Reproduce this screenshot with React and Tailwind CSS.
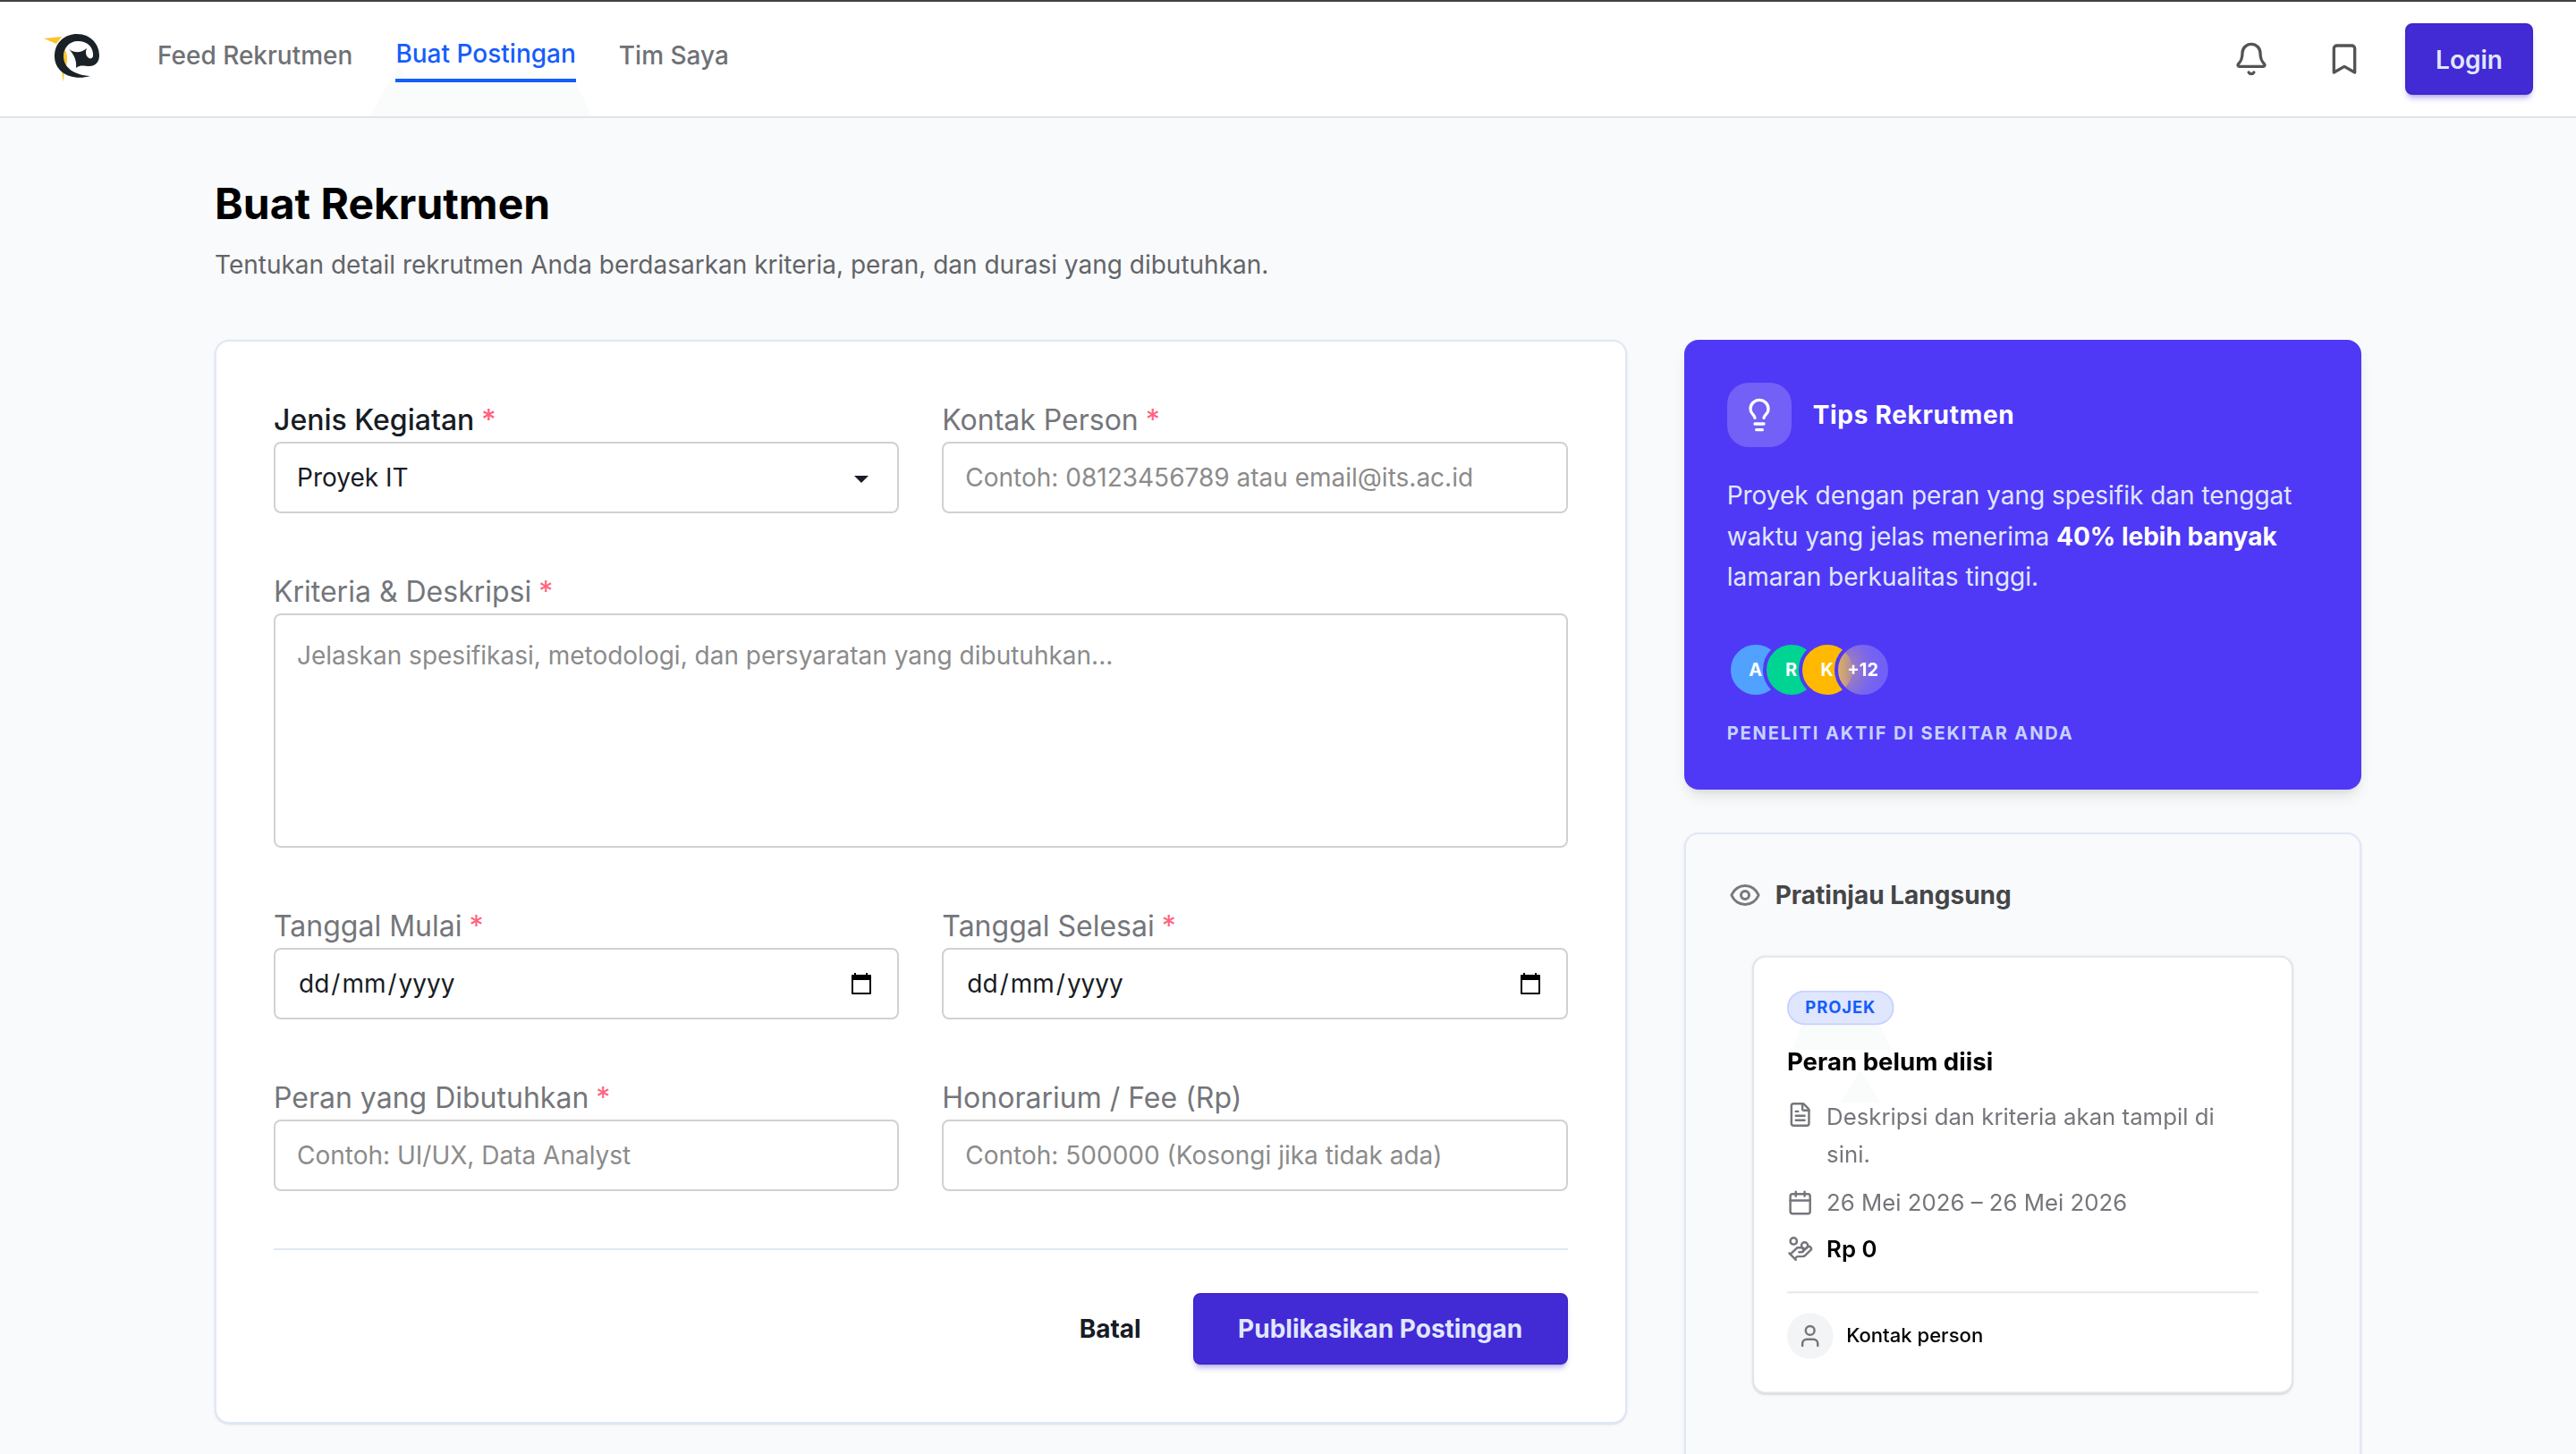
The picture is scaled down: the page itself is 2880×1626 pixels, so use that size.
import { Bell, Bookmark, Calendar, Eye, FileText, HandCoins, Lightbulb, User } from 'lucide-react';

const fieldClass =
  'flex h-20 w-full items-center rounded-lg border-2 border-[#d1d1d1] bg-white px-6 text-[28px] leading-[42px]';

function Logo() {
  return (
    <svg className="h-16 w-16" viewBox="0 0 64 64">
      <path d="M1 5 21 3 15 11Z" fill="#fcc42c" />
      <path d="M24 17C28 22 28 32 24 42L22.5 54 21 40Z" fill="#fcc42c" />
      <path
        d="M53 47C32 53 13 43 13 25C13 9 25 0 38 0C54 0 63 12 63 24C63 32 58 36 52 36C46 36 42 34 37 38C38 30 35 23 29 17C36 22 43 21 49 16C45 25 54 31 56 25C57 15 50 8 39 8C29 8 23 16 23 25C23 37 34 46 53 47Z"
        fill="#1b2227"
      />
    </svg>
  );
}

function Field({ label, required, active, children }) {
  return (
    <div className="min-w-0">
      <div
        className={
          active
            ? 'h-12 text-[32px] font-medium leading-[48px] text-[#181c24]'
            : 'h-12 text-[32px] leading-[48px] text-[#74767b]'
        }
      >
        {label} {required && <span className="-ml-px text-[#ff637e]">*</span>}
      </div>
      {children}
    </div>
  );
}

function TextField({ placeholder }) {
  return (
    <input
      type="text"
      placeholder={placeholder}
      className={`${fieldClass} placeholder:text-[#8b8b8b]`}
    />
  );
}

function DateField() {
  return (
    <div className={`${fieldClass} justify-between text-[#181c24]`}>
      <span className="flex pl-0.5">
        <span>dd</span>
        <span className="px-0.5">/</span>
        <span>mm</span>
        <span className="px-0.5">/</span>
        <span>yyyy</span>
      </span>
      <svg className="mr-1 h-6 w-6" viewBox="0 0 24 24" fill="none">
        <path d="M2 3h20v20H2z" stroke="#000" strokeWidth="2" strokeLinejoin="round" />
        <path d="M2 3h20v5H2zM4 0h2v3H4zM17 0h2v3h-2z" fill="#000" />
      </svg>
    </div>
  );
}

const avatars = [
  { text: 'A', className: 'bg-[#51a2ff]' },
  { text: 'R', className: 'bg-[#00d492]' },
  { text: 'K', className: 'bg-[#ffb900]' },
  { text: '+12', className: 'bg-white/20 backdrop-blur-lg' },
];

export default function App() {
  return (
    <div className="h-screen overflow-hidden bg-[#f9fafc] font-[Inter,sans-serif] text-black">
      <header className="flex h-[132px] items-start justify-between border-t-2 border-b-2 border-t-[#444142] border-b-[#e3e4e5] bg-white pl-12 pr-12">
        <div className="flex items-start">
          <div className="pt-9">
            <Logo />
          </div>
          <nav className="ml-16 flex gap-12 pt-9 text-[28px] font-medium leading-10 text-[#6f7175]">
            <span className="pt-1">Feed Rekrutmen</span>
            <span className="relative pt-0.5">
              <svg className="absolute -left-7 top-8 h-[60px] w-[248px]" viewBox="0 0 248 60">
                <path d="M0 60 31 2 42 20H229L248 60Z" fill="#fafcfb" />
              </svg>
              <span className="relative flex h-[52px] border-b-4 border-[#155dfc] text-[#155dfc]">
                Buat Postingan
              </span>
            </span>
            <span className="pt-1">Tim Saya</span>
          </nav>
        </div>
        <div className="flex items-center pt-6">
          <Bell className="mr-16 size-10 text-[#535456]" strokeWidth={2} />
          <Bookmark className="mr-12 size-10 text-[#535456]" strokeWidth={2} />
          <button className="h-20 w-[143px] rounded-lg border-2 border-[#3f27cb] bg-[#422ad5] pt-0.5 text-[28px] font-semibold text-[#e0e7ff] shadow-[0_6px_6px_-2px_#422ad54d,0_4px_4px_-4px_#422ad54d]">
            Login
          </button>
        </div>
      </header>

      <main className="mx-auto w-[2400px]">
        <h1 className="pt-16 text-[48px] font-bold leading-[64px]">Buat Rekrutmen</h1>
        <p className="mt-4 text-[28px] leading-10 text-[#636467]">
          Tentukan detail rekrutmen Anda berdasarkan kriteria, peran, dan durasi yang dibutuhkan.
        </p>

        <div className="mt-16 grid grid-cols-12 items-start gap-16">
          {/* Form */}
          <section className="col-span-8 h-[1212px] rounded-2xl border-2 border-[#e0e7f7] bg-white p-16 shadow-sm">
            <div className="grid grid-cols-2 gap-x-12 gap-y-16">
              <Field label="Jenis Kegiatan" required active>
                <div className={`${fieldClass} justify-between text-[#181c24]`}>
                  <span>Proyek IT</span>
                  <svg className="mr-2 mt-1 h-2 w-4" viewBox="0 0 16 8">
                    <path d="M0 0h16L8 8z" fill="#181c24" />
                  </svg>
                </div>
              </Field>
              <Field label="Kontak Person" required>
                <TextField placeholder="Contoh: 08123456789 atau email@its.ac.id" />
              </Field>
              <div className="col-span-2">
                <Field label="Kriteria & Deskripsi" required>
                  <textarea
                    placeholder="Jelaskan spesifikasi, metodologi, dan persyaratan yang dibutuhkan..."
                    className="block h-[262px] w-full resize-none rounded-lg border-2 border-[#d1d1d1] px-6 py-6 text-[28px] leading-[42px] placeholder:text-[#8b8b8b]"
                  />
                </Field>
              </div>
              <Field label="Tanggal Mulai" required>
                <DateField />
              </Field>
              <Field label="Tanggal Selesai" required>
                <DateField />
              </Field>
              <Field label="Peran yang Dibutuhkan" required>
                <TextField placeholder="Contoh: UI/UX, Data Analyst" />
              </Field>
              <Field label="Honorarium / Fee (Rp)">
                <TextField placeholder="Contoh: 500000 (Kosongi jika tidak ada)" />
              </Field>
            </div>

            <div className="mt-16 flex items-center justify-end border-t-2 border-[#e0e7f7] pt-12 text-[28px] font-bold">
              <button className="mr-[58px] text-[#181c24]">Batal</button>
              <button className="h-20 w-[419px] rounded-lg border-2 border-[#3f27cb] bg-[#422ad5] text-[#e0e7ff] shadow-[0_6px_6px_-2px_#422ad54d,0_4px_4px_-4px_#422ad54d]">
                Publikasikan Postingan
              </button>
            </div>
          </section>

          <aside className="col-span-4 flex flex-col gap-12">
            {/* Tips */}
            <section className="h-[503px] rounded-2xl bg-[#4f39f6] p-12 text-white shadow-lg">
              <div className="flex items-center gap-6">
                <div className="flex size-[72px] items-center justify-center rounded-3xl bg-white/20">
                  <Lightbulb className="size-10" />
                </div>
                <h2 className="text-[28px] font-bold tracking-wide">Tips Rekrutmen</h2>
              </div>
              <p className="mt-8 text-[28px] leading-[45.5px] text-[#e0e7ff]">
                Proyek dengan peran yang spesifik dan tenggat waktu yang jelas menerima{' '}
                <strong className="font-bold text-white">40% lebih banyak</strong> lamaran berkualitas
                tinggi.
              </p>
              <div className="mt-12 flex -space-x-6">
                {avatars.map((avatar) => (
                  <div
                    key={avatar.text}
                    className={`flex size-16 items-center justify-center rounded-full border-4 border-[#4f39f6] text-[20px] font-bold ${avatar.className}`}
                  >
                    {avatar.text}
                  </div>
                ))}
              </div>
              <p className="mt-6 text-[20px] font-bold leading-[30px] tracking-[1.9px] text-[#c6d2ff]">
                PENELITI AKTIF DI SEKITAR ANDA
              </p>
            </section>

            {/* Live preview */}
            <section className="h-[800px] rounded-2xl border-2 border-[#e0e7f7] bg-[#f9fafc] p-12 shadow-sm">
              <div className="flex items-center gap-4 text-[28px] font-bold leading-10 text-[#454648]">
                <Eye className="size-9 text-[#77797d]" />
                Pratinjau Langsung
              </div>

              <div className="mt-12 origin-top scale-[0.92] rounded-2xl border-2 border-[#e5e5e7] bg-white p-10 text-[28px] leading-10 text-[#74767b] shadow-sm">
                <div className="relative">
                  <svg className="absolute left-0 top-[42px] h-24 w-32" viewBox="0 0 128 96">
                    <path d="M17 0h96l14 30H7zM89 54l25 41H65z" fill="#fafcfb" />
                  </svg>
                  <span className="relative flex h-[42px] w-[130px] items-center justify-center rounded-full border-2 border-[#c6d2ff] bg-[#dfe6fd] text-[20px] font-bold tracking-wider text-[#155dfc]">
                    PROJEK
                  </span>
                  <h3 className="relative mt-6 text-[30px] font-bold text-black">Peran belum diisi</h3>
                </div>
                <div className="relative mt-[25px] flex flex-col gap-4">
                  <div className="flex gap-4">
                    <FileText className="mt-1 size-8 shrink-0" />
                    <p className="leading-[45.5px]">Deskripsi dan kriteria akan tampil di sini.</p>
                  </div>
                  <div className="flex items-center gap-4">
                    <Calendar className="size-8" />
                    26 Mei 2026 – 26 Mei 2026
                  </div>
                  <div className="flex items-center gap-4">
                    <HandCoins className="size-8" />
                    <span className="font-semibold text-black">Rp 0</span>
                  </div>
                </div>
                <div className="mt-8 flex items-center gap-4 border-t-2 border-[#e5e5e7] pt-6">
                  <div className="flex size-14 items-center justify-center rounded-full bg-[#f3f4f6]">
                    <User className="size-8" />
                  </div>
                  <span className="text-[24px] font-medium text-black">Kontak person</span>
                </div>
              </div>
            </section>
          </aside>
        </div>
      </main>
    </div>
  );
}
